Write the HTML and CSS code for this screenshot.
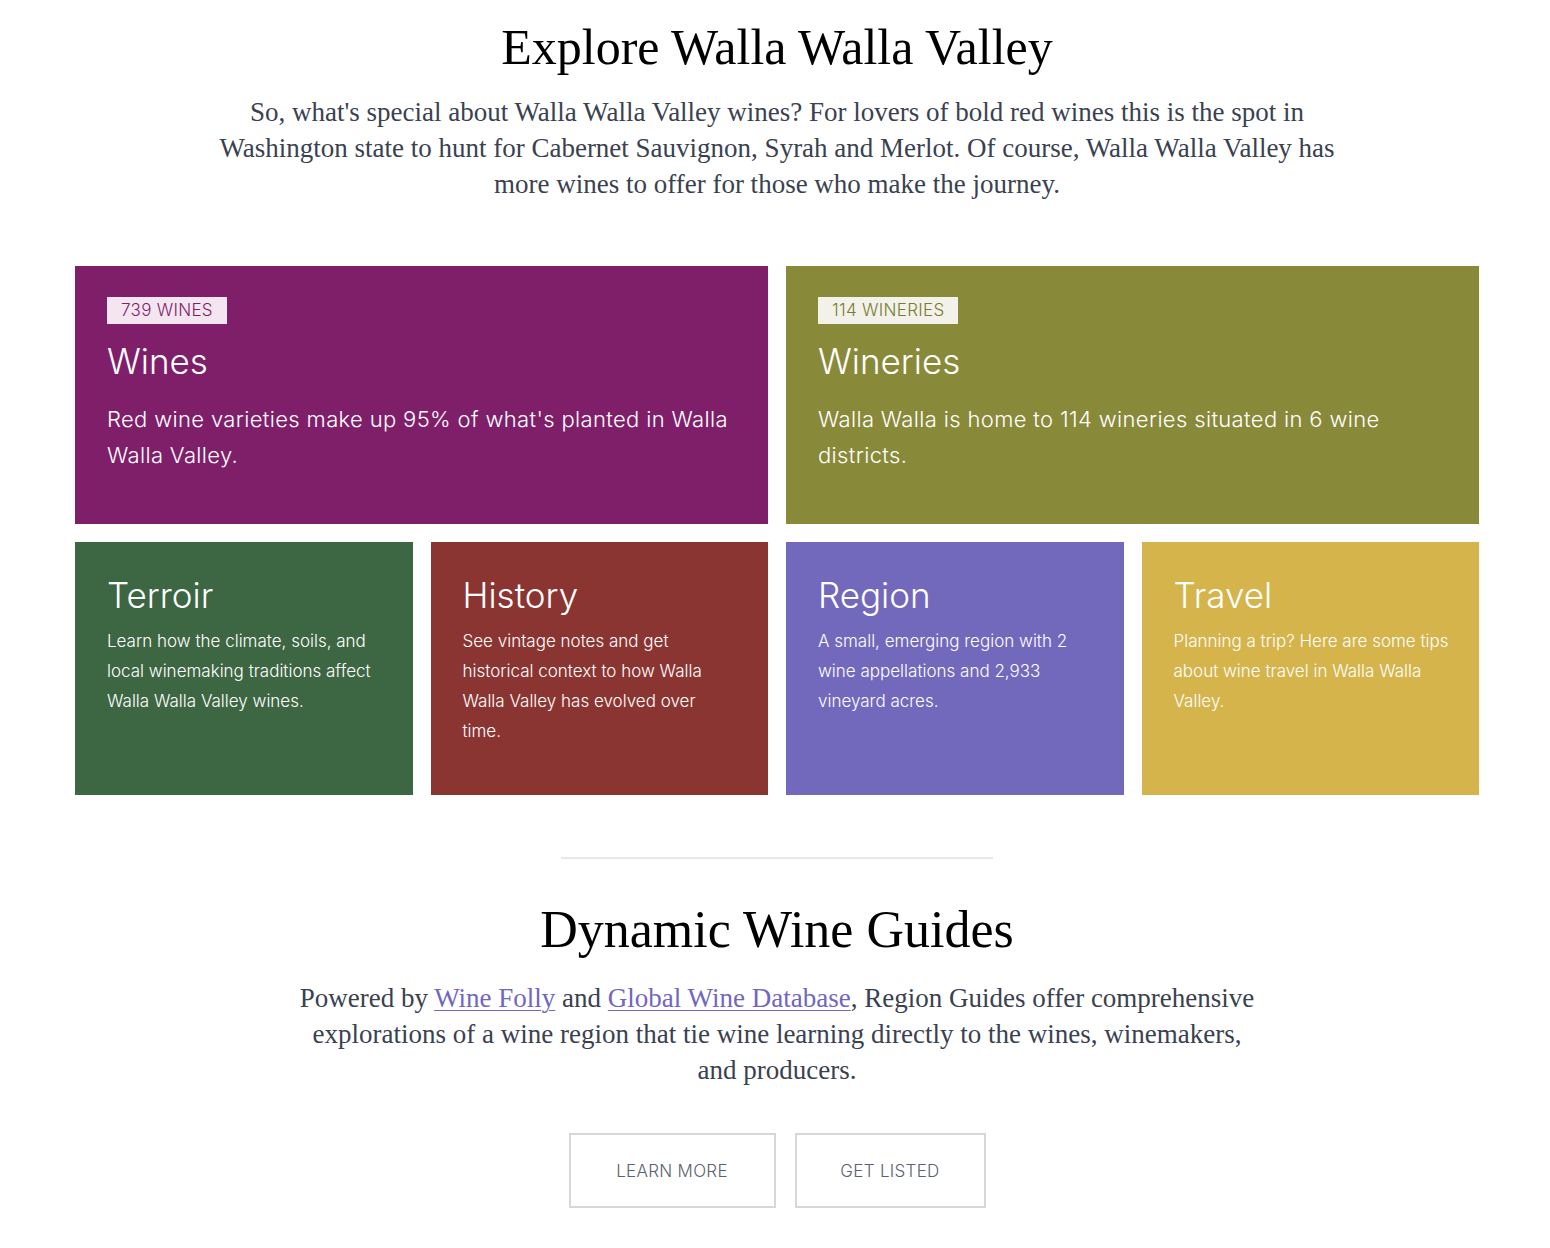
FILE: index.html
```html
<!DOCTYPE html>
<html lang="en">
<head>
<meta charset="utf-8">
<title>Explore Walla Walla Valley</title>
<link rel="stylesheet" href="styles.css">
</head>
<body>
<main class="page">
  <section class="intro">
    <h1 class="title">Explore Walla Walla Valley</h1>
    <p class="lead lead-wide">So, what's special about Walla Walla Valley wines? For lovers of bold red wines this is the spot in Washington state to hunt for Cabernet Sauvignon, Syrah and Merlot. Of course, Walla Walla Valley has more wines to offer for those who make the journey.</p>
  </section>

  <section class="grid">
    <a class="card card-wide card-wines" href="#">
      <span class="badge badge-wines">739 WINES</span>
      <h2 class="card-title">Wines</h2>
      <p class="card-text-lg">Red wine varieties make up 95% of what's planted in Walla Walla Valley.</p>
    </a>
    <a class="card card-wide card-wineries" href="#">
      <span class="badge badge-wineries">114 WINERIES</span>
      <h2 class="card-title">Wineries</h2>
      <p class="card-text-lg">Walla Walla is home to 114 wineries situated in 6 wine districts.</p>
    </a>
    <a class="card card-small card-terroir" href="#">
      <h2 class="card-title">Terroir</h2>
      <p class="card-text">Learn how the climate, soils, and local winemaking traditions affect Walla Walla Valley wines.</p>
    </a>
    <a class="card card-small card-history" href="#">
      <h2 class="card-title">History</h2>
      <p class="card-text">See vintage notes and get historical context to how Walla Walla Valley has evolved over time.</p>
    </a>
    <a class="card card-small card-region" href="#">
      <h2 class="card-title">Region</h2>
      <p class="card-text">A small, emerging region with 2 wine appellations and 2,933 vineyard acres.</p>
    </a>
    <a class="card card-small card-travel" href="#">
      <h2 class="card-title">Travel</h2>
      <p class="card-text">Planning a trip? Here are some tips about wine travel in Walla Walla Valley.</p>
    </a>
  </section>

  <hr class="divider">

  <section class="guides">
    <h2 class="title title-guides">Dynamic Wine Guides</h2>
    <p class="lead lead-narrow">Powered by <a class="link" href="#">Wine Folly</a> and <a class="link" href="#">Global Wine Database</a>, Region Guides offer comprehensive explorations of a wine region that tie wine learning directly to the wines, winemakers, and producers.</p>
    <div class="actions">
      <a class="btn btn-learn" href="#">LEARN MORE</a>
      <a class="btn btn-list" href="#">GET LISTED</a>
    </div>
  </section>
</main>
</body>
</html>
```

FILE: styles.css
```css
* { box-sizing: border-box; }

html, body {
  margin: 0;
  padding: 0;
  background: #ffffff;
}

.page {
  width: 1404px;
  margin: 0 0 0 75px;
  padding: 16px 0 40px;
  display: flex;
  flex-direction: column;
  align-items: center;
}

.intro {
  display: flex;
  flex-direction: column;
  align-items: center;
}

.title {
  margin: 0;
  font-family: "Liberation Serif", "Times New Roman", serif;
  font-weight: 400;
  font-size: 50px;
  line-height: 62px;
  color: #000000;
  text-align: center;
}

.lead {
  margin: 0;
  font-family: "Liberation Serif", "Times New Roman", serif;
  font-size: 27px;
  line-height: 36px;
  color: #3a4150;
  text-align: center;
}

.lead-wide {
  width: 1150px;
  margin-top: 16px;
}

.grid {
  width: 1404px;
  margin-top: 64px;
  display: grid;
  grid-template-columns: repeat(4, 1fr);
  gap: 18px;
}

.card {
  display: flex;
  flex-direction: column;
  align-items: flex-start;
  padding: 31px 24px 31px 32px;
  color: #ffffff;
  text-decoration: none;
  font-family: "Inter", "Noto Sans", sans-serif;
}

.card-wide {
  grid-column: span 2;
  height: 258px;
}

.card-small {
  height: 253px;
  padding-right: 30px;
}

.card-wines { background: #7f1f6a; }
.card-wineries { background: #89893a; }
.card-terroir { background: #3d6642; }
.card-history { background: #8b3532; }
.card-region { background: #7268bc; }
.card-travel { background: #d5b44b; }

.badge {
  display: inline-block;
  height: 27px;
  padding: 0 14px;
  font-size: 17px;
  line-height: 27px;
  letter-spacing: 0.3px;
  font-weight: 300;
}

.badge-wines { background: #f3e6f0; color: #7f1f6a; }
.badge-wineries { background: #f3f2ea; color: #7a7a30; }

.card-title {
  margin: 0;
  font-size: 35px;
  line-height: 44px;
  font-weight: 300;
}

.badge + .card-title {
  margin-top: 15px;
}

.card-text-lg {
  margin: 18px 0 0;
  font-size: 22px;
  line-height: 36px;
  letter-spacing: 0.35px;
  font-weight: 300;
}

.card-text {
  margin: 9px 0 0;
  font-size: 17px;
  line-height: 30px;
  font-weight: 300;
}

.divider {
  width: 432px;
  height: 2px;
  margin: 62px 0 0;
  border: 0;
  background: #e5e7eb;
}

.guides {
  display: flex;
  flex-direction: column;
  align-items: center;
  margin-top: 40px;
}

.title-guides {
  font-size: 52px;
}

.lead-narrow {
  width: 960px;
  margin-top: 19px;
}

.link {
  color: #7266c0;
  text-decoration: underline;
  text-decoration-thickness: 1px;
  text-underline-offset: 3px;
}

.actions {
  display: flex;
  gap: 19px;
  margin-top: 45px;
}

.btn {
  display: flex;
  align-items: center;
  justify-content: center;
  height: 75px;
  border: 2px solid #d4d7dc;
  font-family: "Inter", "Noto Sans", sans-serif;
  font-size: 17px;
  letter-spacing: 0.3px;
  font-weight: 300;
  color: #5b6170;
  text-decoration: none;
}

.btn-learn { width: 207px; }
.btn-list { width: 191px; }
```
